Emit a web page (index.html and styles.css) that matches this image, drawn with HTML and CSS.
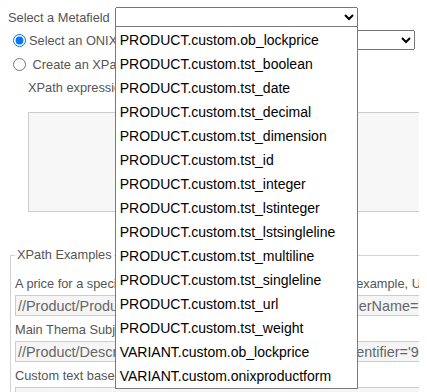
FILE: index.html
```html
<!DOCTYPE html>
<html lang="en">
<head>
    <meta charset="UTF-8">
    <meta name="viewport" content="width=device-width, initial-scale=1.0">
    <title>Metafield mapping</title>
    <link rel="stylesheet" href="styles.css">
</head>
<body>
    <div class="row">
        <label class="lbl" for="metafield">Select a Metafield</label>
        <div class="picker">
            <select id="metafield" class="sel sel-meta"></select>
            <ul class="popup">
                <li>PRODUCT.custom.ob_lockprice</li>
                <li>PRODUCT.custom.tst_boolean</li>
                <li>PRODUCT.custom.tst_date</li>
                <li>PRODUCT.custom.tst_decimal</li>
                <li>PRODUCT.custom.tst_dimension</li>
                <li>PRODUCT.custom.tst_id</li>
                <li>PRODUCT.custom.tst_integer</li>
                <li>PRODUCT.custom.tst_lstinteger</li>
                <li>PRODUCT.custom.tst_lstsingleline</li>
                <li>PRODUCT.custom.tst_multiline</li>
                <li>PRODUCT.custom.tst_singleline</li>
                <li>PRODUCT.custom.tst_url</li>
                <li>PRODUCT.custom.tst_weight</li>
                <li>VARIANT.custom.ob_lockprice</li>
                <li>VARIANT.custom.onixproductform</li>
            </ul>
        </div>
    </div>

    <div class="row row-opt">
        <input type="radio" id="modeOnix" name="mode" checked>
        <label class="lbl" for="modeOnix">Select an ONIX element</label>
        <select class="sel sel-onix"></select>
    </div>

    <div class="row row-opt">
        <input type="radio" id="modeXpath" name="mode">
        <label class="lbl" for="modeXpath">&nbsp;Create an XPath expression</label>
    </div>

    <div class="xpath-block">
        <div class="lbl xpath-lbl">XPath expression:</div>
        <div class="xpath-box"></div>
    </div>

    <fieldset class="examples">
        <legend>XPath Examples</legend>
        <label class="ex-lbl">A price for a specific price type, supplier, and a currency, for example, USD</label>
        <input class="ex-input" type="text" readonly value="//Product/ProductSupply/SupplyDetail/Supplier[SupplierName='ACME']/../Price[CurrencyCode='USD']/PriceAmount">
        <label class="ex-lbl">Main Thema Subject code</label>
        <input class="ex-input" type="text" readonly value="//Product/DescriptiveDetail/Subject[SubjectSchemeIdentifier='93']/SubjectCode">
        <label class="ex-lbl">Custom text based on the product form</label>
        <input class="ex-input" type="text" readonly value="//Product/DescriptiveDetail/ProductForm">
    </fieldset>
</body>
</html>
```

FILE: styles.css
```css
html {
    overflow: hidden;
}
body {
    font-family: Arial, "Liberation Sans", sans-serif;
    font-size: 0.8rem;
    color: #555;
    margin: 7px 8px;
}
.row {
    display: flex;
    align-items: center;
    height: 20px;
}
.row-opt {
    margin-top: 3px;
}
.row-opt + .row-opt {
    margin-top: 4px;
}
.row input[type="radio"] {
    margin: 0 3px 0 5px;
}
.picker {
    position: relative;
    margin-left: 5px;
}
.sel {
    height: 20px;
    font-family: inherit;
    font-size: 0.8rem;
}
.sel-meta {
    width: 243px;
}
.sel-onix {
    flex: 1;
    margin: 0 4px 0 5px;
}
.popup {
    position: absolute;
    top: 19px;
    left: 0;
    z-index: 10;
    box-sizing: border-box;
    width: 243px;
    margin: 0;
    padding: 1px 0 0;
    list-style: none;
    background: #fff;
    border: 1px solid #7a7a7a;
}
.popup li {
    height: 24px;
    line-height: 24px;
    padding-left: 4px;
    font-size: 14px;
    color: #000;
    white-space: nowrap;
}
.xpath-block {
    margin-left: 20px;
}
.xpath-lbl {
    margin-top: 4px;
    line-height: 20px;
}
.xpath-box {
    box-sizing: border-box;
    width: 700px;
    height: 100px;
    margin-top: 14px;
    background: #f7f7f7;
    border: 1px solid #ccc;
}
.examples {
    width: 700px;
    margin: 35px 0 0 2px;
    padding: 12px 4px 0;
    border: 1px solid #d3d3d3;
}
.examples legend {
    padding: 0 2px;
    line-height: 16px;
}
.ex-lbl {
    display: block;
    line-height: 18px;
    margin-bottom: 2px;
    white-space: nowrap;
}
.ex-input {
    display: block;
    box-sizing: border-box;
    width: 700px;
    height: 21px;
    margin: 0 0 5px;
    padding: 0 2px;
    font-family: inherit;
    font-size: 0.9rem;
    color: #666;
    background: #f5f5f5;
    border: 1px solid #ccc;
}
```
